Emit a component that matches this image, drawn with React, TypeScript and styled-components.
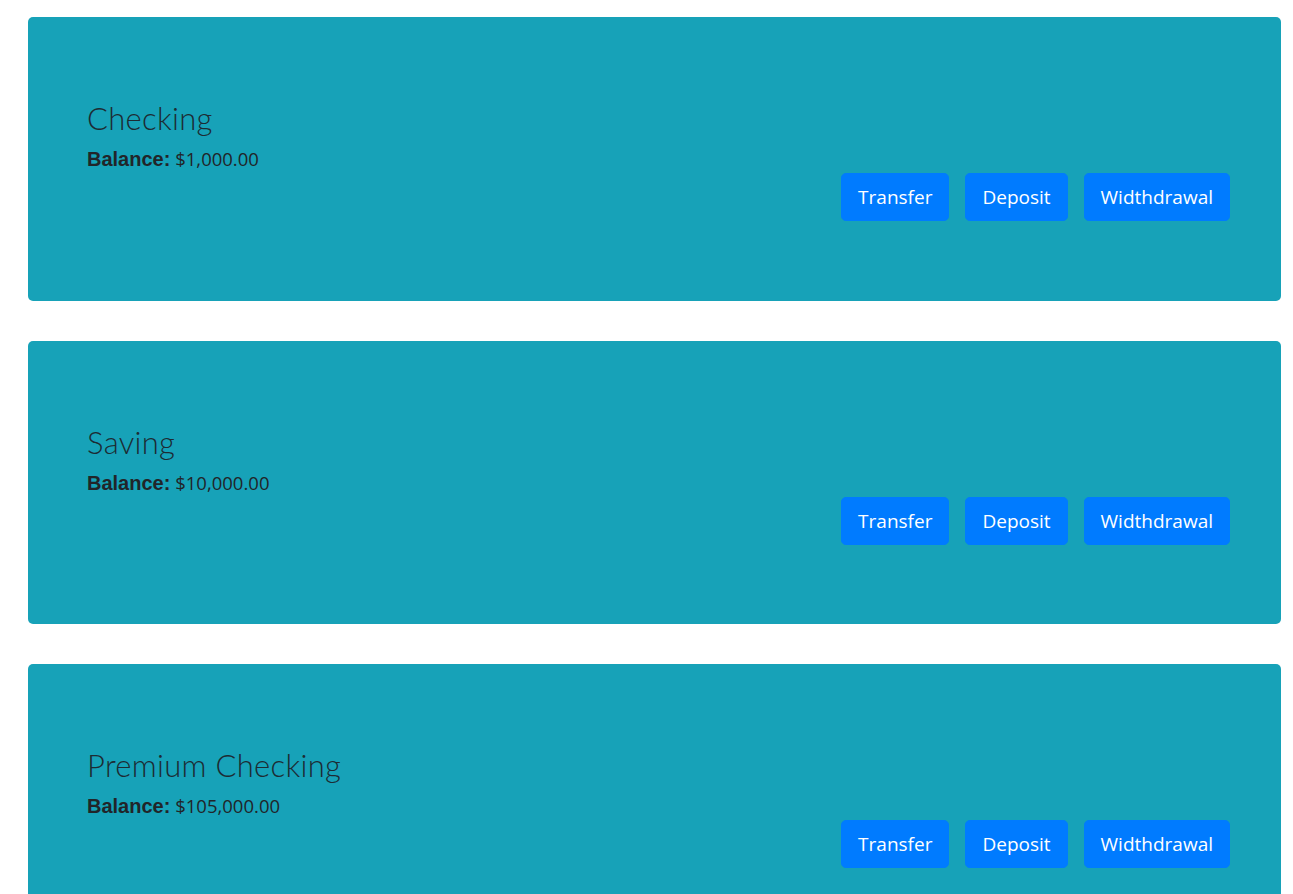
import React from "react";
import styled, { createGlobalStyle } from "styled-components";

const GlobalStyle = createGlobalStyle`
  html, body { margin: 0; padding: 0; background: #ffffff; }
  body { font-family: "Open Sans", "Noto Sans", sans-serif; color: #212529; }
  * { box-sizing: border-box; }
`;

const Page = styled.div`
  display: flex;
  flex-direction: column;
  gap: 40px;
  padding: 17px 12px 40px 28px;
`;

const Card = styled.section`
  display: flex;
  justify-content: space-between;
  align-items: flex-start;
  background: #17a2b8;
  border-radius: 5px;
  padding: 83px 51px 79.5px 59px;
`;

const Info = styled.div`
  display: flex;
  flex-direction: column;
  gap: 9px;
`;

const Title = styled.h2`
  margin: 0;
  font-family: "Lato", "Open Sans", sans-serif;
  font-weight: 300;
  font-size: 31px;
  line-height: 36px;
  color: #1d2b33;
  letter-spacing: 0.3px;
`;

const Balance = styled.p`
  margin: 0;
  font-size: 18.5px;
  line-height: 27px;
  color: #212529;
`;

const Label = styled.strong`
  font-family: "Liberation Sans", Arial, sans-serif;
  font-weight: 700;
  font-size: 20px;
`;

const Actions = styled.div`
  display: flex;
  gap: 16px;
  margin-top: 73px;
`;

const Button = styled.button`
  height: 48px;
  padding: 0 16px;
  border: 1px solid #007bff;
  border-radius: 4.8px;
  background: #007bff;
  color: #ffffff;
  font-family: "Open Sans", "Noto Sans", sans-serif;
  font-size: 19px;
  line-height: 30px;
  cursor: pointer;
`;

const accounts = [
  { name: "Checking", balance: "$1,000.00" },
  { name: "Saving", balance: "$10,000.00" },
  { name: "Premium Checking", balance: "$105,000.00" },
];

export default function App() {
  return (
    <>
      <GlobalStyle />
      <Page>
        {accounts.map((a) => (
          <Card key={a.name}>
            <Info>
              <Title>{a.name}</Title>
              <Balance>
                <Label>Balance:</Label> {a.balance}
              </Balance>
            </Info>
            <Actions>
              <Button>Transfer</Button>
              <Button>Deposit</Button>
              <Button>Widthdrawal</Button>
            </Actions>
          </Card>
        ))}
      </Page>
    </>
  );
}
